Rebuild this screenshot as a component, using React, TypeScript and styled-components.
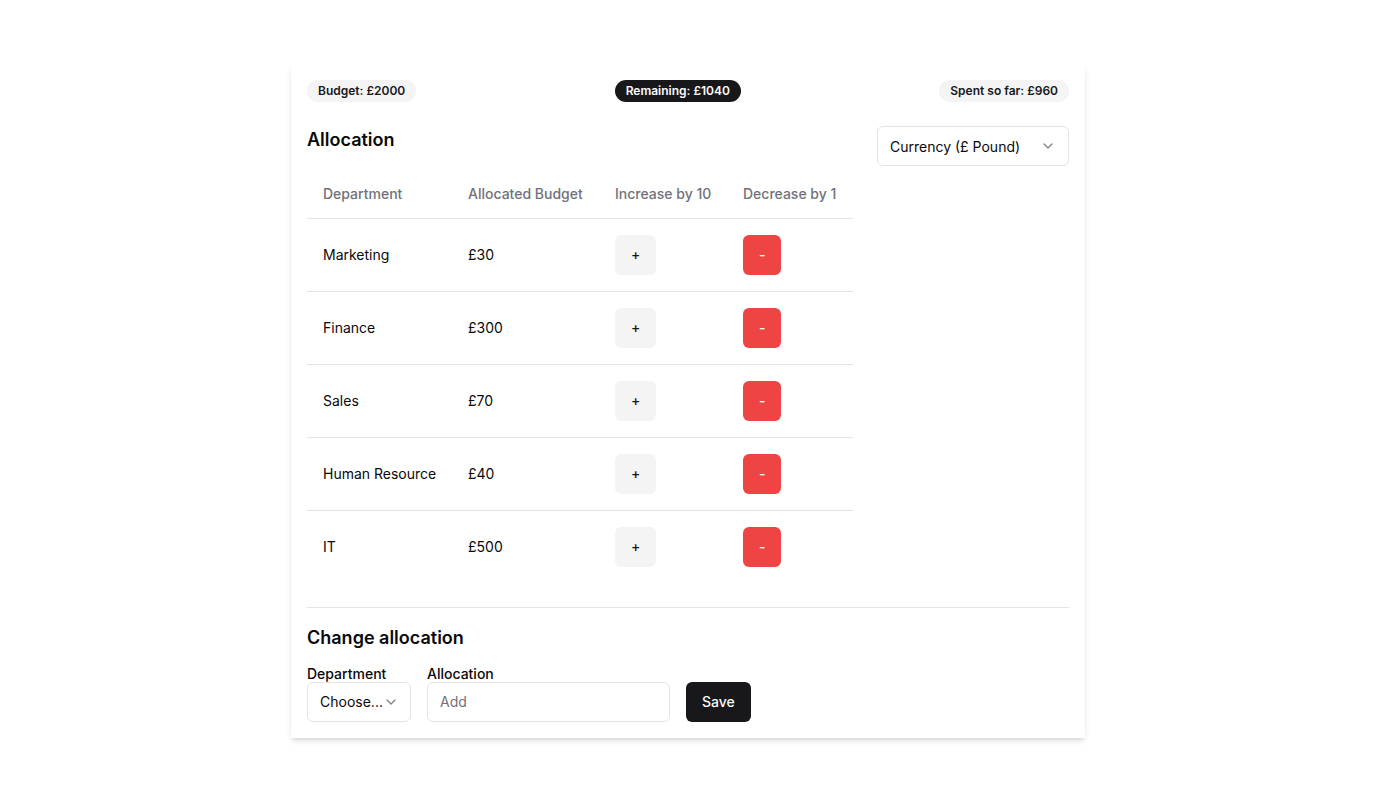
import React from "react";
import styled, { createGlobalStyle } from "styled-components";

const Global = createGlobalStyle`
  * { box-sizing: border-box; }
  html, body { background: #ffffff; }
  body { margin: 0; min-height: 100vh; font-family: Inter, "Noto Sans", sans-serif; color: #09090b; }
`;

const Page = styled.div`
  display: flex;
  justify-content: center;
  padding: 64px 0 40px;
`;

const Card = styled.div`
  width: 794px;
  background: #fff;
  padding: 16px;
  box-shadow: 0 4px 6px -1px rgba(0,0,0,0.12), 0 2px 4px -2px rgba(0,0,0,0.1);
  display: flex;
  flex-direction: column;
`;

const BadgeRow = styled.div`
  display: flex;
  justify-content: space-between;
  align-items: center;
`;

const Badge = styled.span<{ $dark?: boolean }>`
  display: inline-flex;
  align-items: center;
  border-radius: 9999px;
  border: 1px solid transparent;
  padding: 2px 10px;
  font-size: 12px;
  line-height: 16px;
  font-weight: 600;
  background: ${(p) => (p.$dark ? "#18181b" : "#f4f4f5")};
  color: ${(p) => (p.$dark ? "#fafafa" : "#18181b")};
`;

const Main = styled.div`
  display: flex;
  justify-content: space-between;
  align-items: flex-start;
  margin-top: 24px;
`;

const LeftCol = styled.div`
  display: flex;
  flex-direction: column;
  gap: 16px;
`;

const Heading = styled.h2`
  margin: 0;
  font-size: 18px;
  line-height: 28px;
  font-weight: 600;
`;

const Table = styled.table`
  border-collapse: collapse;
  table-layout: fixed;
  width: 546px;
  font-size: 14px;
`;

const HeadCell = styled.th<{ $w: number }>`
  width: ${(p) => p.$w}px;
  height: 48px;
  padding: 0 16px;
  text-align: left;
  font-weight: 500;
  color: #71717a;
  vertical-align: middle;
  white-space: nowrap;
`;

const Row = styled.tr`
  border-top: 1px solid #e4e4e7;
`;

const Cell = styled.td`
  padding: 16px;
  vertical-align: middle;
  line-height: 20px;
  white-space: nowrap;
`;

const SmallButton = styled.button<{ $danger?: boolean }>`
  height: 40px;
  padding: 0 16px;
  border: none;
  border-radius: 6px;
  font-family: inherit;
  font-size: 14px;
  font-weight: 500;
  background: ${(p) => (p.$danger ? "#ef4444" : "#f4f4f5")};
  color: ${(p) => (p.$danger ? "#fafafa" : "#18181b")};
  cursor: pointer;
`;

const SelectBox = styled.div<{ $w: number }>`
  width: ${(p) => p.$w}px;
  height: 40px;
  border: 1px solid #e4e4e7;
  border-radius: 6px;
  padding: 0 12px;
  display: flex;
  align-items: center;
  justify-content: space-between;
  font-size: 14px;
  background: #fff;
  white-space: nowrap;
`;

const Chevron = styled.svg`
  width: 16px;
  height: 16px;
  opacity: 0.5;
  flex-shrink: 0;
`;

const Divider = styled.hr`
  margin: 24px 0 0;
  border: none;
  border-top: 1px solid #e4e4e7;
`;

const SubHeading = styled(Heading)`
  margin-top: 16px;
`;

const FormRow = styled.div`
  display: flex;
  align-items: flex-end;
  gap: 16px;
  margin-top: 14px;
`;

const Field = styled.div`
  display: flex;
  flex-direction: column;
`;

const Label = styled.label`
  font-size: 14px;
  font-weight: 500;
  line-height: 16px;
`;

const Input = styled.input`
  width: 243px;
  height: 40px;
  border: 1px solid #e4e4e7;
  border-radius: 6px;
  padding: 0 12px;
  font-family: inherit;
  font-size: 14px;
  color: #09090b;
  outline: none;
  &::placeholder { color: #71717a; }
`;

const SaveButton = styled.button`
  height: 40px;
  padding: 0 16px;
  border: none;
  border-radius: 6px;
  background: #18181b;
  color: #fafafa;
  font-family: inherit;
  font-size: 14px;
  font-weight: 500;
`;

const ChevronDown = () => (
  <Chevron viewBox="0 0 24 24" fill="none" stroke="currentColor" strokeWidth="2" strokeLinecap="round" strokeLinejoin="round">
    <path d="m6 9 6 6 6-6" />
  </Chevron>
);

const rows = [
  { name: "Marketing", amount: 30 },
  { name: "Finance", amount: 300 },
  { name: "Sales", amount: 70 },
  { name: "Human Resource", amount: 40 },
  { name: "IT", amount: 500 },
];

export default function App() {
  return (
    <>
      <Global />
      <Page>
        <Card>
          <BadgeRow>
            <Badge>Budget: £2000</Badge>
            <Badge $dark>Remaining: £1040</Badge>
            <Badge>Spent so far: £960</Badge>
          </BadgeRow>
          <Main>
            <LeftCol>
              <Heading>Allocation</Heading>
              <Table>
                <thead>
                  <tr>
                    <HeadCell $w={145}>Department</HeadCell>
                    <HeadCell $w={147}>Allocated Budget</HeadCell>
                    <HeadCell $w={128}>Increase by 10</HeadCell>
                    <HeadCell $w={126}>Decrease by 1</HeadCell>
                  </tr>
                </thead>
                <tbody>
                  {rows.map((r) => (
                    <Row key={r.name}>
                      <Cell>{r.name}</Cell>
                      <Cell>£{r.amount}</Cell>
                      <Cell><SmallButton>+</SmallButton></Cell>
                      <Cell><SmallButton $danger>-</SmallButton></Cell>
                    </Row>
                  ))}
                </tbody>
              </Table>
            </LeftCol>
            <SelectBox $w={192}>
              <span>Currency (£ Pound)</span>
              <ChevronDown />
            </SelectBox>
          </Main>
          <Divider />
          <SubHeading>Change allocation</SubHeading>
          <FormRow>
            <Field>
              <Label>Department</Label>
              <SelectBox $w={104}>
                <span>Choose...</span>
                <ChevronDown />
              </SelectBox>
            </Field>
            <Field>
              <Label>Allocation</Label>
              <Input placeholder="Add" />
            </Field>
            <SaveButton>Save</SaveButton>
          </FormRow>
        </Card>
      </Page>
    </>
  );
}
